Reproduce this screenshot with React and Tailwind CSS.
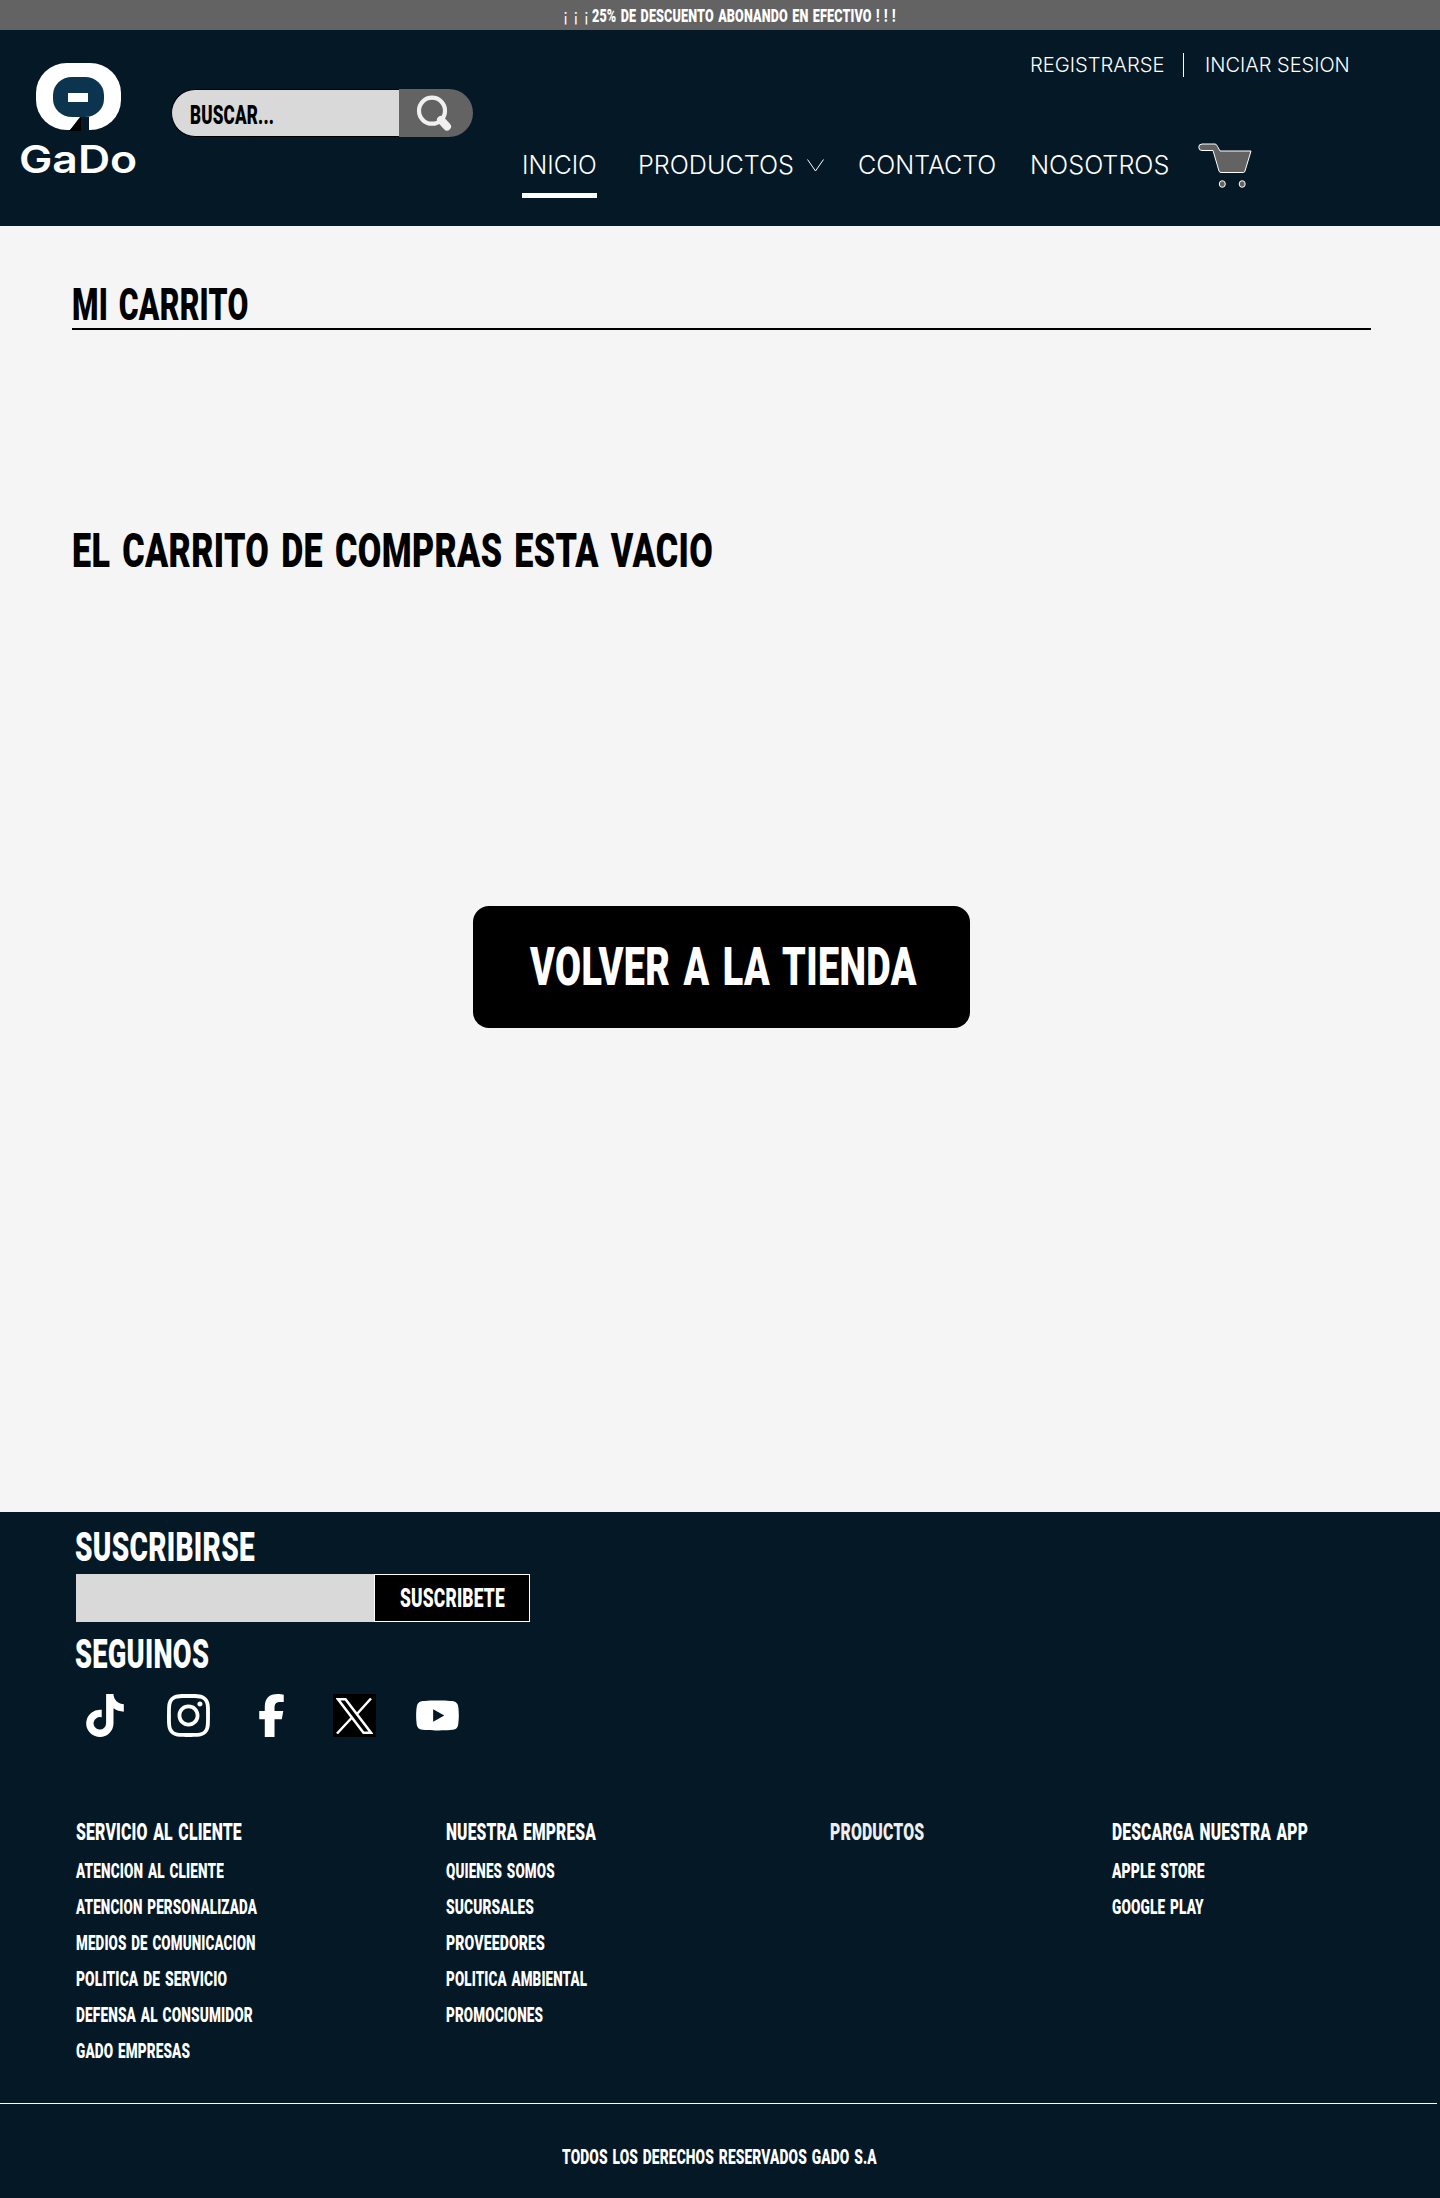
import { useLayoutEffect, useRef, useState } from "react";
import { FaTiktok, FaInstagram, FaFacebookF, FaYoutube } from "react-icons/fa6";

const display = "font-['Roboto',sans-serif] font-black tracking-[0.01em] [word-spacing:0.09em]";
const sans = "font-['Inter',sans-serif] font-[350]";

// Text condensed or stretched horizontally to fill the width of its box.
function Fit({ className = "", face = display, children }) {
  const box = useRef(null);
  const text = useRef(null);
  const [scale, setScale] = useState(1);
  useLayoutEffect(() => {
    setScale(box.current.clientWidth / text.current.offsetWidth);
  }, []);
  return (
    <span ref={box} className={`block shrink-0 whitespace-nowrap ${face} ${className}`}>
      <span ref={text} className="inline-block origin-left align-top" style={{ transform: `scaleX(${scale})` }}>
        {children}
      </span>
    </span>
  );
}

function Logo() {
  return (
    <div className="ml-[19px] mt-[33px] w-[118px]">
      <svg className="ml-[17px] block" width="85" height="69" viewBox="36 63 85 69">
        <rect x="36" y="63" width="85" height="67" rx="31" ry="30" fill="#fff" />
        <path d="M79.500 117H89v15H69z" fill="#041825" />
        <path d="M81 117v14H69z" fill="#000" />
        <path d="M69 130l11-13h-6z" fill="#fff" />
        <rect x="53" y="77" width="51" height="40" rx="19" ry="18" fill="#0d344f" />
        <rect x="68" y="93" width="20" height="9" fill="#fff" />
      </svg>
      <Fit face="font-['Inter',sans-serif] font-semibold" className="mt-[13px] w-[118px] text-[38.5px] leading-[28px] text-white">GaDo</Fit>
    </div>
  );
}

function SearchBar() {
  return (
    <div className="ml-[34px] mt-[59px] flex h-12 w-[302px]">
      <div className="flex w-[228px] items-center rounded-l-full border-y border-l border-black bg-[#d9d9d9] pl-[18px]">
        <Fit className="mt-1 w-[84px] text-[25px] leading-[17px] text-black">BUSCAR...</Fit>
      </div>
      <div className="w-[74px] rounded-r-full bg-[#636363]">
        <svg width="74" height="48" viewBox="399 89 74 48" fill="none">
          <circle cx="432" cy="110.700" r="13" stroke="#f0f0f0" strokeWidth="4.200" />
          <path d="M441 120l6 6.500" stroke="#f0f0f0" strokeWidth="8" strokeLinecap="round" />
        </svg>
      </div>
    </div>
  );
}

function Cart() {
  return (
    <svg className="ml-[29px] block shrink-0" width="54" height="46" viewBox="1197.500 143.500 54 46" fill="#636363" stroke="#fff">
      <path d="M1201.500 144.500H1214.500Q1216 144.500 1217 147L1219.500 151.500H1250.500L1244.500 171.500Q1244 173 1243 173H1220.500Q1219 173 1218.500 171.500L1212.500 151H1201.500A3.250 3.250 0 0 1 1201.500 144.500Z" />
      <ellipse cx="1221.800" cy="184.500" rx="3" ry="3.300" />
      <ellipse cx="1241.700" cy="184.500" rx="3" ry="3.300" />
    </svg>
  );
}

function Header() {
  return (
    <header className="flex h-[196px] bg-[#041825] text-white">
      <Logo />
      <SearchBar />
      <div className="ml-[49px] flex-1">
        <div className="mt-[23px] flex h-[23px] items-center">
          <Fit face={sans} className="ml-[508px] w-[134px] text-[20px] leading-6">REGISTRARSE</Fit>
          <div className="ml-[19px] h-6 w-px bg-white" />
          <Fit face={sans} className="ml-[21px] w-[145px] text-[20px] leading-6">INCIAR SESION</Fit>
        </div>
        <nav className="mt-[67px] flex h-[46px]">
          <Fit face={sans} className="mt-[5px] h-[50px] w-[75px] border-b-[5px] text-[25px] leading-[34px]">INICIO</Fit>
          <Fit face={sans} className="ml-[41px] mt-[5px] w-[156px] text-[25px] leading-[34px]">PRODUCTOS</Fit>
          <svg className="ml-[13px] mt-4 block" width="17" height="13" viewBox="0 0 17 13" fill="none" stroke="#fff">
            <path d="M.5 .5L8.500 12L16.500 .5" />
          </svg>
          <Fit face={sans} className="ml-[34px] mt-[5px] w-[138px] text-[25px] leading-[34px]">CONTACTO</Fit>
          <Fit face={sans} className="ml-[34px] mt-[5px] w-[139px] text-[25px] leading-[34px]">NOSOTROS</Fit>
          <Cart />
        </nav>
      </div>
    </header>
  );
}

const heading = "text-[23px] leading-4";
const item = "text-[20px] leading-[14px]";

function Footer() {
  return (
    <footer className="h-[686px] bg-[#041825] pt-[22px] text-white">
      <div className="h-[291px] pl-[75px]">
        <Fit className="w-[180px] text-[40px] leading-7">SUSCRIBIRSE</Fit>
        <div className="ml-px mt-3 flex h-12">
          <div className="w-[298px] bg-[#d9d9d9]" />
          <div className="flex w-[156px] items-center border border-white bg-black pl-[25px]">
            <Fit className="mt-px w-[105px] text-[25px] leading-[17px]">SUSCRIBETE</Fit>
          </div>
        </div>
        <Fit className="mt-[19px] w-[134px] text-[40px] leading-7">SEGUINOS</Fit>
        <div className="mt-[25px] flex h-[43px] items-center">
          <FaTiktok className="ml-2.5 h-[43px] w-[40px]" />
          <FaInstagram className="ml-[39px] h-[49px] w-[49px]" />
          <FaFacebookF className="ml-[45px] h-[43px] w-[27px]" />
          <div className="ml-12 grid h-[43px] w-[43px] place-items-center bg-black">
            <svg width="37" height="36" viewBox="0 0 37 36" fill="none" stroke="#fff" strokeWidth="2.500">
              <path d="M2 1.250H9.500L35 34.750H27.500Z" />
              <path d="M35 .5L20.500 16.500M1 35.500L16 19.500" />
            </svg>
          </div>
          <FaYoutube className="ml-[39px] h-[43px] w-[45px]" />
        </div>
      </div>
      <div className="flex h-[278px]">
        <div className="ml-[76px] flex w-[370px] flex-col gap-[22px]">
          <Fit className={`mb-px w-[166px] ${heading}`}>SERVICIO AL CLIENTE</Fit>
          <Fit className={`w-[148px] ${item}`}>ATENCION AL CLIENTE</Fit>
          <Fit className={`w-[181px] ${item}`}>ATENCION PERSONALIZADA</Fit>
          <Fit className={`w-[180px] ${item}`}>MEDIOS DE COMUNICACION</Fit>
          <Fit className={`w-[151px] ${item}`}>POLITICA DE SERVICIO</Fit>
          <Fit className={`w-[177px] ${item}`}>DEFENSA AL CONSUMIDOR</Fit>
          <Fit className={`w-[114px] ${item}`}>GADO EMPRESAS</Fit>
        </div>
        <div className="flex w-[384px] flex-col gap-[22px]">
          <Fit className={`mb-px w-[150px] ${heading}`}>NUESTRA EMPRESA</Fit>
          <Fit className={`w-[109px] ${item}`}>QUIENES SOMOS</Fit>
          <Fit className={`w-[88px] ${item}`}>SUCURSALES</Fit>
          <Fit className={`w-[99px] ${item}`}>PROVEEDORES</Fit>
          <Fit className={`w-[141px] ${item}`}>POLITICA AMBIENTAL</Fit>
          <Fit className={`w-[97px] ${item}`}>PROMOCIONES</Fit>
        </div>
        <div className="w-[282px]">
          <Fit className={`w-[94px] text-[#eeeeee] ${heading}`}>PRODUCTOS</Fit>
        </div>
        <div className="flex flex-col gap-[22px]">
          <Fit className={`mb-px w-[196px] ${heading}`}>DESCARGA NUESTRA APP</Fit>
          <Fit className={`w-[93px] ${item}`}>APPLE STORE</Fit>
          <Fit className={`w-[92px] ${item}`}>GOOGLE PLAY</Fit>
        </div>
      </div>
      <div className="h-px w-[1437px] bg-white" />
      <Fit className={`ml-[562px] mt-[46px] w-[315px] ${item}`}>TODOS LOS DERECHOS RESERVADOS GADO S.A</Fit>
    </footer>
  );
}

export default function App() {
  return (
    <div className="h-[2198px] w-[1440px] overflow-hidden bg-[#f5f5f5]">
      <div className="flex h-[30px] items-center bg-[#636363] pl-[563px] text-white">
        <Fit face={sans} className="mt-px w-[26px] text-[17px] leading-5">¡ ¡ ¡</Fit>
        <Fit className="ml-[3px] mt-0.5 w-[304px] text-[18px] leading-[14px]">25% DE DESCUENTO ABONANDO EN EFECTIVO ! ! !</Fit>
      </div>
      <Header />
      <main className="flex h-[1286px] flex-col pl-[72px] pr-[69px]">
        <h1 className="mt-[63px] border-b-2 border-black pb-[7px]">
          <Fit className="w-[177px] text-[45px] leading-8">MI CARRITO</Fit>
        </h1>
        <Fit className="mt-[203px] w-[641px] text-[49px] leading-[35px]">EL CARRITO DE COMPRAS ESTA VACIO</Fit>
        <button className="ml-[401px] mt-[338px] h-[122px] w-[497px] rounded-2xl bg-black pl-[57px] text-white">
          <Fit className="w-[387px] text-left text-[54px] leading-[38px]">VOLVER A LA TIENDA</Fit>
        </button>
      </main>
      <Footer />
    </div>
  );
}
